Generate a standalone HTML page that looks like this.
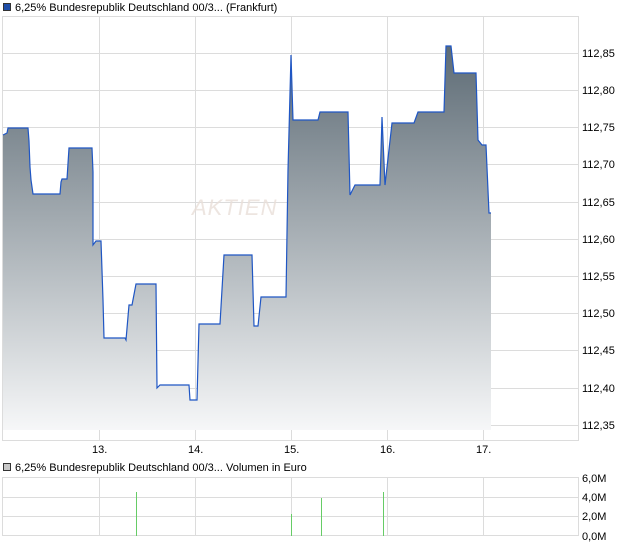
<!DOCTYPE html>
<html><head><meta charset="utf-8"><style>
body{margin:0;background:#fff;width:620px;height:546px;overflow:hidden;font-family:"Liberation Sans",sans-serif;font-size:11px;color:#000}
</style></head><body>
<svg width="620" height="546" viewBox="0 0 620 546" xmlns="http://www.w3.org/2000/svg" font-family="Liberation Sans, sans-serif" font-size="11">
<defs><linearGradient id="g" x1="0" y1="46" x2="0" y2="430" gradientUnits="userSpaceOnUse">
<stop offset="0" stop-color="#5d6b75"/><stop offset="1" stop-color="#f6f7f8"/></linearGradient></defs>
<rect x="3.5" y="3.5" width="7" height="7" fill="#1f4ea8" stroke="#333" stroke-width="1"/>
<text x="15" y="11">6,25% Bundesrepublik Deutschland 00/3... (Frankfurt)</text>
<g stroke="#dcdcdc" stroke-width="1" fill="none">
<rect x="2.5" y="16.5" width="576" height="424"/>
<line x1="99.5" y1="16" x2="99.5" y2="441"/><line x1="195.5" y1="16" x2="195.5" y2="441"/><line x1="291.5" y1="16" x2="291.5" y2="441"/><line x1="387.5" y1="16" x2="387.5" y2="441"/><line x1="483.5" y1="16" x2="483.5" y2="441"/>
<line x1="2" y1="53.5" x2="578" y2="53.5"/><line x1="2" y1="90.5" x2="578" y2="90.5"/><line x1="2" y1="127.5" x2="578" y2="127.5"/><line x1="2" y1="164.5" x2="578" y2="164.5"/><line x1="2" y1="202.5" x2="578" y2="202.5"/><line x1="2" y1="239.5" x2="578" y2="239.5"/><line x1="2" y1="276.5" x2="578" y2="276.5"/><line x1="2" y1="313.5" x2="578" y2="313.5"/><line x1="2" y1="350.5" x2="578" y2="350.5"/><line x1="2" y1="388.5" x2="578" y2="388.5"/><line x1="2" y1="425.5" x2="578" y2="425.5"/>
</g>
<path d="M3,430 L3,135 L7,133 L8,128 L28,128 L29,141 L30,167 L31,180 L33,194 L60,194 L61,182 L62,179 L67,179 L69,148 L92,148 L93,172 L93,245 L96,241 L101,241 L103,300 L104,338 L125,338 L126,340 L129,305 L132,305 L136,284 L156,284 L157,388 L160,385 L189,385 L190,400 L197,400 L199,324 L220,324 L224,255 L252,255 L254,326 L258,326 L261,297 L286,297 L288,170 L291,55 L293,120 L318,120 L320,112 L348,112 L350,195 L355,185 L380,185 L382,117 L385,185 L392,123 L414,123 L418,112 L444,112 L446,46 L451,46 L454,73 L476,73 L478,140 L482,145 L486,145 L489,213 L491,213 L491,430 Z" fill="url(#g)"/>
<text x="192" y="215" font-size="22" fill="#e9dfd8" fill-opacity="0.8" font-style="italic" letter-spacing="1">AKTIEN</text>
<path d="M3,135 L7,133 L8,128 L28,128 L29,141 L30,167 L31,180 L33,194 L60,194 L61,182 L62,179 L67,179 L69,148 L92,148 L93,172 L93,245 L96,241 L101,241 L103,300 L104,338 L125,338 L126,340 L129,305 L132,305 L136,284 L156,284 L157,388 L160,385 L189,385 L190,400 L197,400 L199,324 L220,324 L224,255 L252,255 L254,326 L258,326 L261,297 L286,297 L288,170 L291,55 L293,120 L318,120 L320,112 L348,112 L350,195 L355,185 L380,185 L382,117 L385,185 L392,123 L414,123 L418,112 L444,112 L446,46 L451,46 L454,73 L476,73 L478,140 L482,145 L486,145 L489,213 L491,213" fill="none" stroke="#1f56c4" stroke-width="1.2"/>
<g fill="#000">
<text x="582" y="57">112,85</text><text x="582" y="94">112,80</text><text x="582" y="131">112,75</text><text x="582" y="168">112,70</text><text x="582" y="206">112,65</text><text x="582" y="243">112,60</text><text x="582" y="280">112,55</text><text x="582" y="317">112,50</text><text x="582" y="354">112,45</text><text x="582" y="392">112,40</text><text x="582" y="429">112,35</text>
<text x="92" y="453">13.</text><text x="188" y="453">14.</text><text x="284" y="453">15.</text><text x="380" y="453">16.</text><text x="476" y="453">17.</text>
</g>
<rect x="3.5" y="463.5" width="7" height="7" fill="#c8c8c8" stroke="#333" stroke-width="1"/>
<text x="15" y="471">6,25% Bundesrepublik Deutschland 00/3... Volumen in Euro</text>
<g stroke="#dcdcdc" stroke-width="1" fill="none">
<rect x="2.5" y="477.5" width="576" height="58"/>
<line x1="99.5" y1="477" x2="99.5" y2="536"/><line x1="195.5" y1="477" x2="195.5" y2="536"/><line x1="291.5" y1="477" x2="291.5" y2="536"/><line x1="387.5" y1="477" x2="387.5" y2="536"/><line x1="483.5" y1="477" x2="483.5" y2="536"/>
<line x1="2" y1="497.5" x2="578" y2="497.5"/><line x1="2" y1="516.5" x2="578" y2="516.5"/>
</g>
<g fill="#66cc66">
<rect x="136" y="492" width="1" height="44"/><rect x="291" y="514" width="1" height="22"/><rect x="321" y="498" width="1" height="38"/><rect x="383" y="492" width="1" height="44"/>
</g>
<g fill="#000"><text x="582" y="482">6,0M</text><text x="582" y="501">4,0M</text><text x="582" y="520">2,0M</text><text x="582" y="540">0,0M</text></g>
</svg>
</body></html>
